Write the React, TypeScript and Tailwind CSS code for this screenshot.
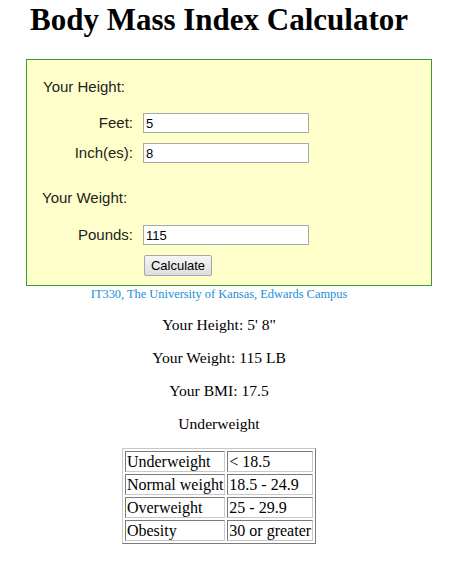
import React from 'react';

const serif = "font-['Liberation_Serif','Times_New_Roman',serif]";
const sans = "font-['Liberation_Sans',Arial,sans-serif]";

const rows: [string, string][] = [
  ['Underweight', '< 18.5'],
  ['Normal weight', '18.5 - 24.9'],
  ['Overweight', '25 - 29.9'],
  ['Obesity', '30 or greater'],
];

// one label + text box line inside the form panel
const Field: React.FC<{ label: string; value: string }> = ({ label, value }) => (
  <div className="flex items-center">
    <span className="w-[106px] text-right text-[15px] leading-[18px] text-[#222]">{label}</span>
    <input
      readOnly
      value={value}
      className={`ml-[10px] h-[20px] w-[166px] border border-[#a9a9a9] bg-white px-[2px] text-[13px] text-black outline-none ${sans}`}
    />
  </div>
);

export default function App() {
  return (
    <div className={`w-[438px] bg-white text-center text-black ${serif}`}>
      <h1 className="pt-[2px] text-[31px] font-bold leading-[36px]">Body Mass Index Calculator</h1>

      <div className={`ml-[26px] mt-[21px] w-[406px] border border-[#3c9a2e] bg-[#ffffcc] pb-[8px] pt-[18px] text-left ${sans}`}>
        <div className="pl-[16px] text-[15px] leading-[18px] text-[#222]">Your Height:</div>
        <div className="mt-[17px] flex flex-col gap-[10px]">
          <Field label="Feet:" value="5" />
          <Field label="Inch(es):" value="8" />
        </div>
        <div className="mt-[26px] pl-[15px] text-[15px] leading-[18px] text-[#222]">Your Weight:</div>
        <div className="mt-[18px]">
          <Field label="Pounds:" value="115" />
        </div>
        <button className="ml-[117px] mt-[10px] h-[21px] w-[68px] rounded-[2px] border border-[#a6a6a6] bg-gradient-to-b from-[#f6f6f6] to-[#dddddd] text-[13px] leading-[19px] text-black">
          Calculate
        </button>
      </div>

      <p className="mt-[1px] text-[12.4px] leading-[14px] text-[#1a8ed6]">
        IT330, The University of Kansas, Edwards Campus
      </p>

      <div className="mt-[15px] text-[15.6px] leading-[18px]">
        <p>Your Height: 5' 8"</p>
        <p className="mt-[15px]">Your Weight: 115 LB</p>
        <p className="mt-[15px]">Your BMI: 17.5</p>
        <p className="mt-[15px]">Underweight</p>
      </div>

      <table className="mx-auto mt-[15px] border-separate border-spacing-[2px] border border-t-[#c8c8c8] border-l-[#c8c8c8] border-r-[#7a7a7a] border-b-[#7a7a7a] text-left text-[16px] leading-[17px]">
        <tbody>
          {rows.map(([name, range]) => (
            <tr key={name}>
              <td className="border border-t-[#7a7a7a] border-l-[#7a7a7a] border-r-[#c8c8c8] border-b-[#c8c8c8] p-[1px]">{name}</td>
              <td className="border border-t-[#7a7a7a] border-l-[#7a7a7a] border-r-[#c8c8c8] border-b-[#c8c8c8] p-[1px]">{range}</td>
            </tr>
          ))}
        </tbody>
      </table>
    </div>
  );
}
